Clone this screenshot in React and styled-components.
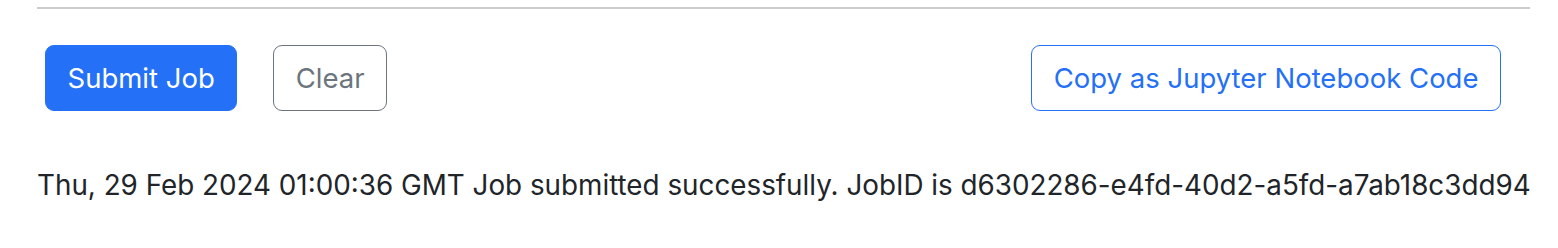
import React from "react";
import styled, { createGlobalStyle, css } from "styled-components";

const Global = createGlobalStyle`
  html, body { margin: 0; padding: 0; background: #fff; }
  body { font-family: Inter, "Noto Sans", sans-serif; color: #212529; }
`;

const Page = styled.div`
  padding: 7px 28px 0 37px;
`;

const Rule = styled.hr`
  margin: 0;
  border: 0;
  border-top: 2px solid #cdcdcd;
`;

const Toolbar = styled.div`
  display: flex;
  align-items: center;
  justify-content: space-between;
  padding: 36px 29px 0 8px;
`;

const Group = styled.div`
  display: flex;
  gap: 36px;
`;

const variants = {
  primary: css`
    background: #2470f6;
    border-color: #2470f6;
    color: #fff;
  `,
  secondary: css`
    background: #fff;
    border-color: #6c757d;
    color: #6c757d;
  `,
  outline: css`
    background: #fff;
    border-color: #2470f6;
    color: #2470f6;
  `,
};

const Button = styled.button`
  box-sizing: border-box;
  height: 66px;
  padding: 1px 21.5px 0;
  border: 1px solid;
  border-radius: 9px;
  font-family: inherit;
  font-size: 27.5px;
  line-height: 1;
  cursor: pointer;
  ${(p) => variants[p.$variant]}
`;

const Status = styled.p`
  margin: 0;
  padding-top: 54px;
  font-size: 27.8px;
  line-height: 40px;
  white-space: nowrap;
`;

export default function App() {
  return (
    <>
      <Global />
      <Page>
        <Rule />
        <Toolbar>
          <Group>
            <Button $variant="primary">Submit Job</Button>
            <Button $variant="secondary">Clear</Button>
          </Group>
          <Button $variant="outline">Copy as Jupyter Notebook Code</Button>
        </Toolbar>
        <Status>
          Thu, 29 Feb 2024 01:00:36 GMT Job submitted successfully. JobID is
          d6302286-e4fd-40d2-a5fd-a7ab18c3dd94
        </Status>
      </Page>
    </>
  );
}
